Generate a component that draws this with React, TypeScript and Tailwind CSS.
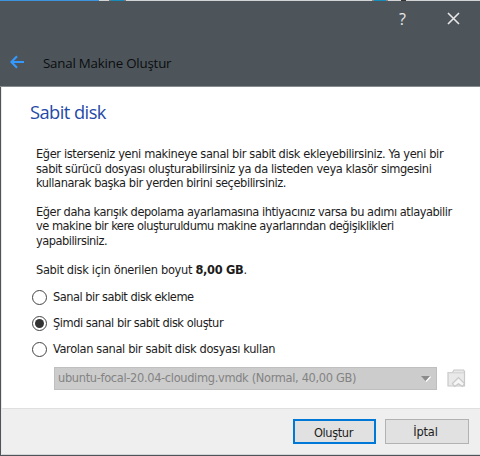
import { ReactNode } from "react";

function Line({ children, className = "" }: { children: ReactNode; className?: string }) {
  return <span className={`block whitespace-nowrap ${className}`}>{children}</span>;
}

function Radio({ label, checked = false, tracking }: { label: string; checked?: boolean; tracking: string }) {
  return (
    <label className="flex h-[26.2px] items-center">
      <span className="flex h-[15px] w-[15px] shrink-0 items-center justify-center rounded-full border border-[#444] bg-white">
        {checked && <span className="h-[9px] w-[9px] rounded-full bg-[#333]" />}
      </span>
      <span className={`ml-[6px] whitespace-nowrap ${tracking}`}>{label}</span>
    </label>
  );
}

export default function App() {
  return (
    <div className="flex h-[456px] w-[480px] flex-col overflow-hidden bg-[#4d555b] font-['DejaVu_Sans_Condensed','DejaVu_Sans',sans-serif] text-[12.7px] leading-[14.6px] text-[#1c1c1c]">
      <div className="flex h-px shrink-0 bg-[#d2d3d4]">
        <div className="w-[99px] bg-[#3d94dc]" />
        <div className="ml-[10px] w-[2px] bg-[#777]" />
        <div className="w-[13px] bg-[#168cba]" />
        <div className="w-[2px] bg-[#777]" />
        <div className="ml-[246px] w-[2px] bg-[#888]" />
        <div className="w-[12px] bg-[#168cba]" />
        <div className="w-[2px] bg-[#888]" />
        <div className="ml-[13px] w-[5px] bg-[#333]" />
      </div>
      <header className="flex h-[86px] shrink-0 flex-col border-b border-[#878c8e]">
        <div className="flex h-[35px] items-center justify-end pr-[20px] text-[#e8e8e8]">
          <span className="mr-[41px] font-['Open_Sans',sans-serif] text-[16px] font-medium leading-none">?</span>
          <svg width="13" height="13" viewBox="0 0 13 13" fill="none" stroke="currentColor" strokeWidth="1.6">
            <path d="M1 1 12 12M12 1 1 12" />
          </svg>
        </div>
        <div className="flex h-[50px] items-center pl-[10px] pt-px">
          <svg width="15" height="14" viewBox="0 0 15 14" fill="none" stroke="#3399ff" strokeWidth="2.1">
            <path d="M14 7H1.5M7 1.2 1.4 7 7 12.8" />
          </svg>
          <span className="ml-[18px] whitespace-nowrap pt-[4px] font-['Open_Sans',sans-serif] text-[13.3px] tracking-[-0.2px] text-[#0b0d0e]">
            Sanal Makine Oluştur
          </span>
        </div>
      </header>
      <div className="ml-px flex min-h-0 flex-1 flex-col border-l border-[#e8e8e8] bg-white">
        <main className="flex h-[321px] shrink-0 flex-col pl-[28px]">
          <h1 className="mt-[13px] h-[24px] whitespace-nowrap font-['Open_Sans',sans-serif] text-[18.3px] leading-[24px] tracking-[-0.55px] text-[#1f4aa8]">
            Sabit disk
          </h1>
          <div className="ml-[6px] mt-[23px]">
            <p>
              <Line className="tracking-[-0.37px]">Eğer isterseniz yeni makineye sanal bir sabit disk ekleyebilirsiniz. Ya yeni bir</Line>
              <Line className="tracking-[-0.39px]">sabit sürücü dosyası oluşturabilirsiniz ya da listeden veya klasör simgesini</Line>
              <Line className="tracking-[-0.43px]">kullanarak başka bir yerden birini seçebilirsiniz.</Line>
            </p>
            <p className="mt-[14px]">
              <Line className="tracking-[-0.44px]">Eğer daha karışık depolama ayarlamasına ihtiyacınız varsa bu adımı atlayabilir</Line>
              <Line className="tracking-[-0.48px]">ve makine bir kere oluşturuldumu makine ayarlarından değişiklikleri</Line>
              <Line className="tracking-[-0.5px]">yapabilirsiniz.</Line>
            </p>
            <p className="mt-[14px]">
              <Line className="tracking-[-0.32px]">
                Sabit disk için önerilen boyut <b>8,00 GB</b>.
              </Line>
            </p>
          </div>
          <div className="ml-[2px] mt-[7px]">
            <Radio label="Sanal bir sabit disk ekleme" tracking="tracking-[-0.5px]" />
            <Radio label="Şimdi sanal bir sabit disk oluştur" checked tracking="tracking-[-0.47px]" />
            <Radio label="Varolan sanal bir sabit disk dosyası kullan" tracking="tracking-[-0.36px]" />
          </div>
          <div className="ml-[24px] mt-[4px] flex items-center">
            <div className="flex h-[23px] w-[383px] items-center justify-between border border-[#bfbfbf] bg-[#cccccc] pl-[3px] pr-[5px] text-[#838383]">
              <span className="whitespace-nowrap pt-px tracking-[-0.33px]">ubuntu-focal-20.04-cloudimg.vmdk (Normal, 40,00 GB)</span>
              <svg width="10" height="7" viewBox="0 0 10 7">
                <path d="M5 6.5 9.5 1.5" stroke="#fff" strokeWidth="1.5" />
                <path d="M0 1h9L4.5 6z" fill="#8b8b8b" />
              </svg>
            </div>
            <svg className="ml-[10px]" width="19" height="19" viewBox="0 0 19 19" fill="#e9e9e9" stroke="#c8c8c8" strokeWidth="1.2">
              <path d="M1 17V3.5h4.5l1.5-2.5h9.5l1 1.5V17z" />
              <path d="M1.5 3.8h15.5" stroke="#d4d4d4" />
              <path d="M5.5 14.5 11.5 8.5l6 6-2 3-4-2.8-4 2.8z" fill="#f6f6f6" />
            </svg>
          </div>
        </main>
        <footer className="flex min-h-0 flex-1 justify-end gap-[9px] border-b border-t border-b-[#d4d4d4] border-t-[#dfdfdf] bg-[#efefef] pr-[11px] pt-[10px]">
          <button className="h-[25px] w-[83px] border-2 border-[#0078d7] bg-[#e1e1e1] pt-px pr-[2px] leading-[21px] tracking-[-0.38px]">Oluştur</button>
          <button className="h-[25px] w-[84px] border border-[#b2b2b2] bg-[#e1e1e1] pt-px pr-[3px] leading-[22px] tracking-[-0.2px]">İptal</button>
        </footer>
      </div>
      <div className="h-px shrink-0 bg-[#4d555b]" />
    </div>
  );
}
